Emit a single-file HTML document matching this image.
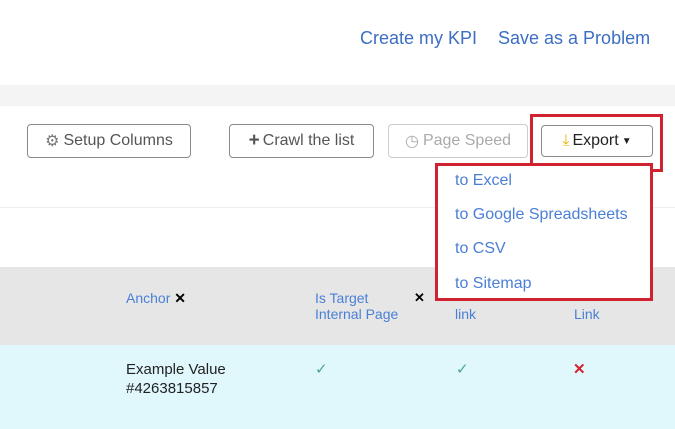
<!DOCTYPE html>
<html><head><style>
body{margin:0;width:675px;height:429px;overflow:hidden;background:#fff;font-family:"Liberation Sans",sans-serif;position:relative}
.a{position:absolute}
.lnk{color:#3c6ec3;font-size:18px;top:28px}
.btn{position:absolute;top:124px;height:34px;border:1px solid #8a8a8a;border-radius:4px;box-sizing:border-box;font-size:16px;color:#555;display:flex;align-items:center;justify-content:center;background:#fff}
.dd{color:#4a7fd6;font-size:16px;left:455px}
.th{color:#4a7fd6;font-size:14px;line-height:16px}
</style></head><body>
<div class="a lnk" style="left:360px">Create my KPI</div>
<div class="a lnk" style="left:498px">Save as a Problem</div>
<div class="a" style="left:0;top:85px;width:675px;height:21px;background:#f4f4f4"></div>
<div class="a" style="left:0;top:207px;width:675px;height:1px;background:#eee"></div>
<div class="a" style="left:0;top:267px;width:675px;height:78px;background:#e6e6e6"></div>
<div class="a" style="left:0;top:345px;width:675px;height:84px;background:#e0f8fc"></div>
<div class="btn" style="left:27px;width:164px"><span style="color:#777;margin-right:4px">⚙</span>Setup Columns</div>
<div class="btn" style="left:229px;width:145px"><b style="margin-right:3px;font-size:19px">+</b>Crawl the list</div>
<div class="btn" style="left:388px;width:140px;color:#aaa;border-color:#ccc"><span style="margin-right:4px">◷</span>Page Speed</div>
<div class="btn" style="left:541px;top:125px;width:112px;height:32px;color:#222"><span style="color:#f0b400;margin-right:3px">⤓</span>Export<span style="font-size:10px;margin-left:3px">▼</span></div>
<div class="a" style="left:530px;top:114px;width:127px;height:52px;border:3px solid #d0232f"></div>
<div class="a" style="left:435px;top:163px;width:212px;height:132px;border:3px solid #d0232f;background:#fff"></div>
<div class="a dd" style="top:172px">to Excel</div>
<div class="a dd" style="top:206px">to Google Spreadsheets</div>
<div class="a dd" style="top:240px">to CSV</div>
<div class="a dd" style="top:275px">to Sitemap</div>
<div class="a th" style="left:126px;top:290px">Anchor <b style="color:#000">✕</b></div>
<div class="a th" style="left:315px;top:290px">Is Target<br>Internal Page</div>
<div class="a" style="left:414px;top:290px;font-size:13px;font-weight:bold">✕</div>
<div class="a th" style="left:455px;top:306px">link</div>
<div class="a th" style="left:574px;top:306px">Link</div>
<div class="a" style="left:126px;top:360px;font-size:15px;color:#222;line-height:19px">Example Value<br>#4263815857</div>
<div class="a" style="left:315px;top:360px;color:#4aa88a;font-size:15px">✓</div>
<div class="a" style="left:456px;top:360px;color:#4aa88a;font-size:15px">✓</div>
<div class="a" style="left:573px;top:360px;color:#d0232f;font-size:15px;font-weight:bold">✕</div>
</body></html>
